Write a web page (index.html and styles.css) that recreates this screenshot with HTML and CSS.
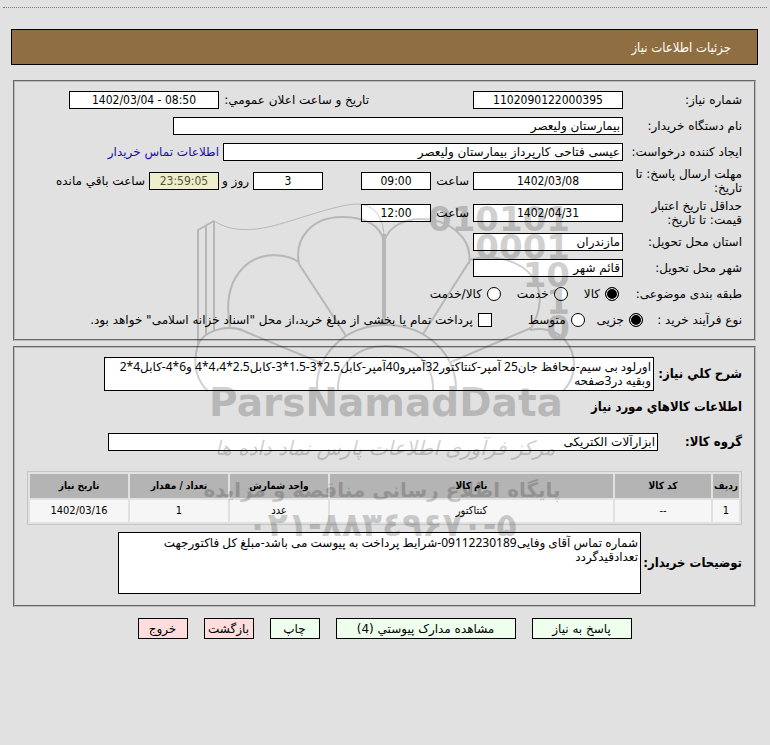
FILE: index.html
```html
<!DOCTYPE html>
<html lang="fa" dir="rtl">
<head>
  <meta charset="UTF-8">
  <meta name="viewport" content="width=device-width, initial-scale=1.0">
  <title>جزئیات اطلاعات نیاز</title>
  <link rel="stylesheet" href="styles.css">
</head>
<body>
  <div class="page">
    <h1 class="title-bar">جزئیات اطلاعات نیاز</h1>

    <form>
      <section class="panel need-info">
        <div class="row">
          <label class="label" for="need-no">شماره نیاز:</label>
          <input class="field num w150" id="need-no" type="text" value="1102090122000395">
          <label class="label second" for="announce">تاریخ و ساعت اعلان عمومي:</label>
          <input class="field num w150" id="announce" type="text" value="1402/03/04 - 08:50">
        </div>
        <div class="row">
          <label class="label" for="org">نام دستگاه خریدار:</label>
          <input class="field w450" id="org" type="text" value="بیمارستان ولیعصر">
        </div>
        <div class="row">
          <label class="label" for="creator">ایجاد کننده درخواست:</label>
          <input class="field w400" id="creator" type="text" value="عیسی فتاحی کارپرداز بیمارستان ولیعصر">
          <a class="contact" href="#">اطلاعات تماس خریدار</a>
        </div>
        <div class="row tall">
          <label class="label" for="reply-date">مهلت ارسال پاسخ: تا تاریخ:</label>
          <input class="field num w150" id="reply-date" type="text" value="1402/03/08">
          <label class="unit" for="reply-time">ساعت</label>
          <input class="field num w70" id="reply-time" type="text" value="09:00">
          <input class="field num w70 days" id="days" type="text" value="3">
          <label class="unit day-unit" for="days">روز و</label>
          <input class="field num w70 timer" id="timer" type="text" value="23:59:05" readonly>
          <label class="after" for="timer">ساعت باقي مانده</label>
        </div>
        <div class="row tall">
          <label class="label" for="price-date">حداقل تاریخ اعتبار قیمت: تا تاریخ:</label>
          <input class="field num w150" id="price-date" type="text" value="1402/04/31">
          <label class="unit" for="price-time">ساعت</label>
          <input class="field num w70" id="price-time" type="text" value="12:00">
        </div>
        <div class="row">
          <label class="label" for="province">استان محل تحویل:</label>
          <input class="field w150" id="province" type="text" value="مازندران">
        </div>
        <div class="row">
          <label class="label" for="city">شهر محل تحویل:</label>
          <input class="field w150" id="city" type="text" value="قائم شهر">
        </div>
        <div class="row">
          <span class="label">طبقه بندی موضوعی:</span>
          <div class="choices">
            <label class="choice"><input type="radio" name="category" checked>کالا</label>
            <label class="choice"><input type="radio" name="category">خدمت</label>
            <label class="choice"><input type="radio" name="category">کالا/خدمت</label>
          </div>
        </div>
        <div class="row">
          <span class="label narrow">نوع فرآیند خرید :</span>
          <div class="choices process">
            <label class="choice"><input type="radio" name="process" checked>جزیی</label>
            <label class="choice"><input type="radio" name="process">متوسط</label>
            <label class="choice treasury"><input type="checkbox">پرداخت تمام یا بخشی از مبلغ خرید،از محل "اسناد خزانه اسلامی" خواهد بود.</label>
          </div>
        </div>
      </section>

      <section class="panel goods-info">
        <div class="wide-row">
          <label class="strong desc-label" for="summary">شرح کلي نیاز:</label>
          <textarea class="field summary" id="summary">اورلود بی سیم-محافظ جان25 آمپر-کنتاکتور32آمپرو40آمپر-کابل2.5*3-1.5*3-کابل2.5*4،4*4 و6*4-کابل4*2 وبقیه در3صفحه</textarea>
        </div>
        <h2 class="strong heading">اطلاعات کالاهاي مورد نیاز</h2>
        <div class="wide-row group-row">
          <label class="strong group-label" for="group">گروه کالا:</label>
          <input class="field group" id="group" type="text" value="ابزارآلات الکتریکی">
        </div>
        <table class="goods">
          <thead>
            <tr>
              <th class="c-row">ردیف</th>
              <th class="c-code">کد کالا</th>
              <th>نام کالا</th>
              <th class="c-small">واحد شمارش</th>
              <th class="c-small">تعداد / مقدار</th>
              <th class="c-small">تاریخ نیاز</th>
            </tr>
          </thead>
          <tbody>
            <tr>
              <td>1</td>
              <td>--</td>
              <td>کنتاکتور</td>
              <td>عدد</td>
              <td>1</td>
              <td>1402/03/16</td>
            </tr>
          </tbody>
        </table>
        <div class="wide-row">
          <label class="strong notes-label" for="notes">توضیحات خریدار:</label>
          <textarea class="field notes" id="notes">شماره تماس آقای وفایی09112230189-شرایط پرداخت به پیوست می باشد-مبلغ کل فاکتورجهت
تعدادقیدگردد</textarea>
        </div>
      </section>

      <div class="actions">
        <button type="button" class="btn w100">پاسخ به نیاز</button>
        <button type="button" class="btn w180">مشاهده مدارک پیوستي (4)</button>
        <button type="button" class="btn">چاپ</button>
        <button type="button" class="btn red">بازگشت</button>
        <button type="button" class="btn red">خروج</button>
      </div>
    </form>

    <!-- watermark over the form -->
    <svg class="watermark" width="400" height="360" viewBox="190 190 400 360" aria-hidden="true">
      <g fill="none" stroke="#000" stroke-width="2">
        <path d="M198 345V230L214 221M206 335V226M214 331V221"/>
        <path stroke-width="1" d="M214 221C233 233 256 231 280 224C308 216 340 204 358 204C374 205 383 216 384 236"/>
        <path d="M299 264C294 238 312 217 342 217C366 217 380 226 384 241"/>
        <path d="M384 241C389 227 403 219 420 219C450 219 473 238 469 264"/>
        <path stroke-width="4" d="M384 234V326"/>
        <path d="M299 264L346 336M469 262L423 334"/>
        <path d="M299 262C284 252 260 253 246 265C230 279 225 300 230 327"/>
        <path d="M469 260C491 253 519 260 532 276C544 292 541 312 530 330"/>
        <path d="M242 330C224 324 203 332 198 345C191 367 199 383 208 391"/>
        <path d="M530 330C549 326 565 334 572 352C577 368 572 382 563 391"/>
        <path d="M239 329L321 363M531 328L451 362"/>
        <path d="M317 391C315 355 345 325 386 325C427 325 457 355 456 391"/>
        <path d="M338 391C337 364 357 346 386 346C415 346 434 364 433 391"/>
      </g>
      <g class="bits">
        <text x="570" y="231">010101</text>
        <text x="570" y="259">0001</text>
        <text x="570" y="287">10</text>
        <text x="570" y="314">1</text>
        <text x="570" y="340">0</text>
      </g>
      <text class="mark-name" x="386" y="416">ParsNamadData</text>
      <text class="mark-fa thin" x="385" y="455">مرکز فرآوری اطلاعات پارس نماد داده ها</text>
      <text class="mark-fa" x="382" y="497">پایگاه اطلاع رسانی مناقصه و مزایده</text>
      <text class="mark-tel" x="382" y="536">۰۲۱-۸۸۳٤۹۶۷۰-۵</text>
    </svg>
  </div>
</body>
</html>
```
FILE: styles.css
```css
* {
  box-sizing: border-box;
}
body {
  margin: 0;
  background: #e1e1e1;
  color: #000;
  font-family: "DejaVu Sans", Tahoma, sans-serif;
  font-size: 12px;
  line-height: 14px;
}
.page {
  position: relative;
  margin: 7px 3px 0;
  border-top: 1px dotted #777;
  padding: 21px 9px 0 8px;
}
.title-bar {
  margin: 0;
  height: 36px;
  padding: 0 26px;
  border: 1px solid #000;
  background: #8f6e41;
  color: #fff;
  font-family: "DejaVu Sans Condensed", Tahoma, sans-serif;
  font-size: 13px;
  font-weight: normal;
  line-height: 35px;
}
.panel {
  margin: 15px 2px 0;
  border: 2px groove #bbb;
  padding: 5px 12px 6px;
}
.goods-info {
  margin-top: 5px;
  padding: 9px 12px 11px;
}
.row {
  display: flex;
  align-items: center;
  height: 26px;
}
.row.tall {
  height: 32px;
}
.label {
  flex: none;
  width: 119px;
}
.label.second {
  width: 150px;
  margin-right: 104px;
}
.label.narrow {
  width: 95px;
}
.field {
  height: 18px;
  margin: 0;
  border: 1px solid #000;
  border-radius: 0;
  padding: 0 2px;
  background: #fff;
  color: #000;
  font-family: inherit;
  font-size: 12px;
  line-height: 14px;
}
.num {
  direction: ltr;
  font-family: "DejaVu Sans Condensed", Tahoma, sans-serif;
  text-align: center;
}
.w150 {
  width: 150px;
}
.w450 {
  width: 450px;
}
.w400 {
  width: 400px;
}
.w70 {
  width: 70px;
}
.contact {
  margin-right: 4px;
  color: #1a0dab;
  text-decoration: none;
}
.unit {
  width: 42px;
  padding-right: 4px;
  white-space: nowrap;
}
.days {
  margin-right: 38px;
}
.day-unit {
  width: 34px;
}
.timer {
  background: #eeeecc;
  color: #555533;
}
.after {
  margin-right: 4px;
}
.choices {
  display: flex;
  gap: 16px;
  padding-right: 4px;
}
.process {
  gap: 12px;
}
.choice {
  display: flex;
  align-items: center;
  gap: 5px;
}
.treasury {
  margin-right: 24px;
}
.choice input {
  appearance: none;
  flex: none;
  width: 14px;
  height: 14px;
  margin: 0;
  border: 1px solid #000;
  background: #fff;
}
.choice input[type="radio"] {
  border-radius: 50%;
}
.choice input[type="radio"]:checked {
  background: #000;
  box-shadow: inset 0 0 0 1px #fff;
}
.wide-row {
  display: flex;
  align-items: center;
}
.strong {
  margin: 0;
  font-family: "DejaVu Sans Condensed", Tahoma, sans-serif;
  font-size: 13px;
  font-weight: bold;
}
textarea.field {
  font-family: "Noto Sans", "DejaVu Sans", Tahoma, sans-serif;
  resize: none;
  overflow: hidden;
}
.desc-label {
  width: 88px;
}
.summary {
  width: 550px;
  height: 34px;
  padding: 2px;
}
.heading {
  padding: 9px 0 19px;
}
.group-label {
  width: 84px;
}
.group {
  width: 550px;
}
.goods {
  width: 100%;
  margin: 20px 0 7px;
  border: 1px solid #c4c4c4;
  border-spacing: 2px;
  table-layout: fixed;
  font-family: "DejaVu Sans Condensed", Tahoma, sans-serif;
  font-size: 11px;
}
.goods th,
.goods td {
  padding: 0;
  text-align: center;
}
.goods th {
  height: 24px;
  background: #b4b4b4;
  font-size: 10px;
}
.goods td {
  height: 22px;
  background: #f6f6f6;
}
.c-row {
  width: 26px;
}
.c-code {
  width: 96px;
}
.c-small {
  width: 98px;
}
.notes-label {
  width: 101px;
}
.notes {
  width: 523px;
  height: 62px;
  padding: 3px 2px;
}
.actions {
  display: flex;
  justify-content: center;
  gap: 16px;
  margin-top: 11px;
}
.btn {
  width: 50px;
  height: 21px;
  border: 1px solid #000;
  padding: 0;
  background: #eeffee;
  color: #000;
  font-family: inherit;
  font-size: 12px;
}
.btn.w100 {
  width: 100px;
}
.btn.w180 {
  width: 180px;
}
.btn.red {
  background: #ffdddd;
}
.watermark {
  position: absolute;
  top: 182px;
  left: 50%;
  margin-left: -195px;
  opacity: 0.18;
  pointer-events: none;
}
.watermark text {
  text-anchor: middle;
  font-family: "DejaVu Sans", sans-serif;
  font-weight: bold;
}
.watermark .bits text {
  direction: ltr;
  text-anchor: end;
  font-size: 34px;
}
.watermark .mark-name {
  direction: ltr;
  font-size: 39px;
}
.watermark .mark-fa {
  font-size: 20px;
}
.watermark .thin {
  font-style: italic;
  font-weight: normal;
}
.watermark .mark-tel {
  direction: ltr;
  unicode-bidi: bidi-override;
  font-size: 33px;
}
```
